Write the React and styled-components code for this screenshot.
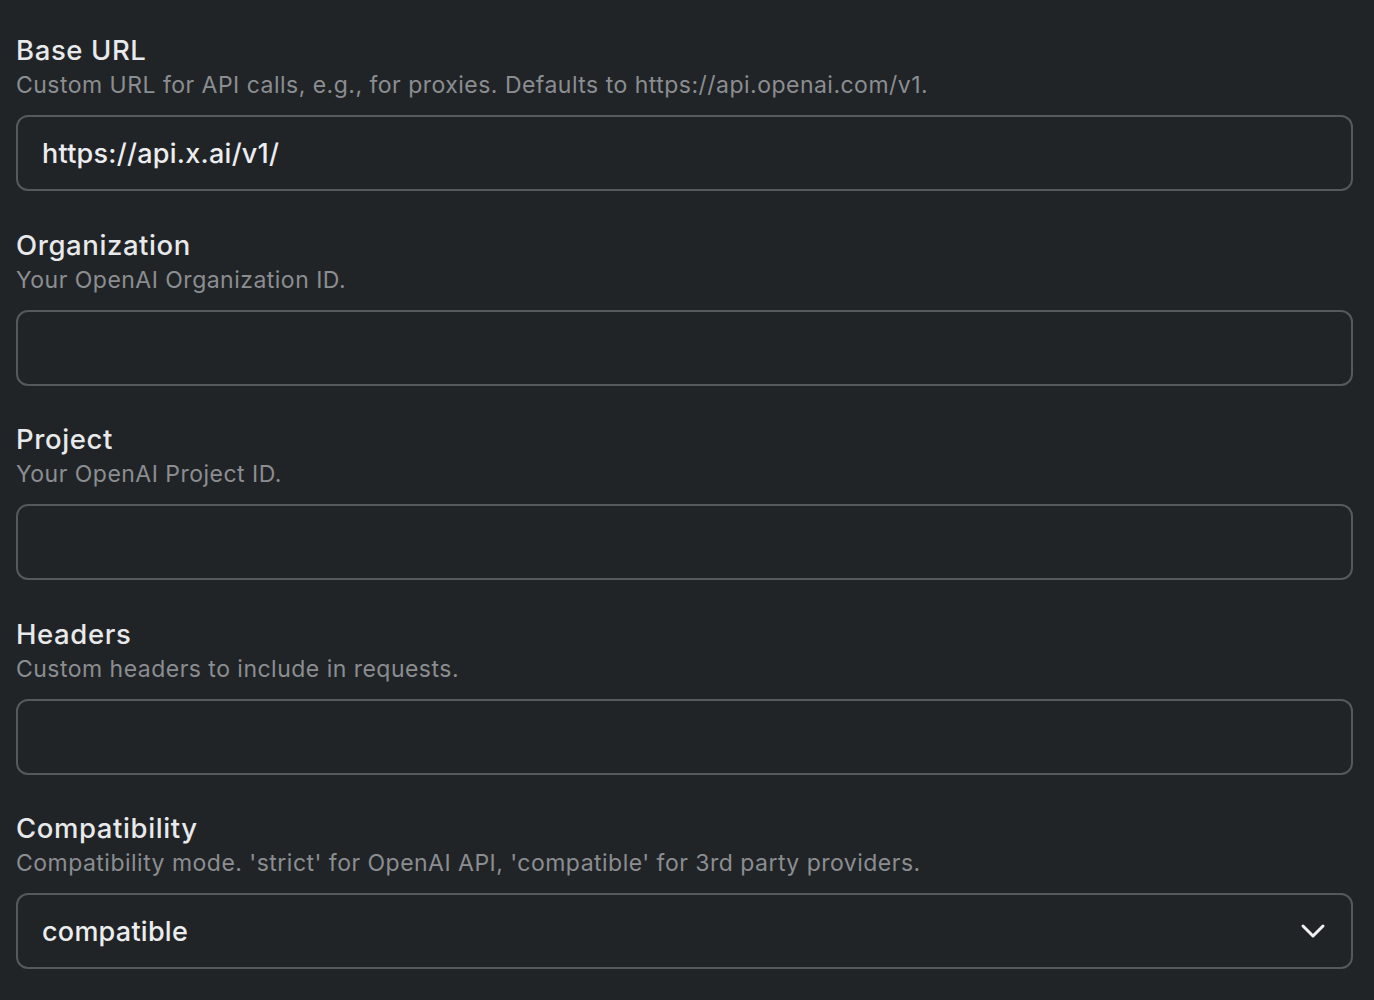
import React from "react";
import styled, { createGlobalStyle } from "styled-components";

const Global = createGlobalStyle`
  html, body { margin: 0; padding: 0; background: #212427; }
  body { font-family: Inter, "Noto Sans", sans-serif; -webkit-font-smoothing: antialiased; }
`;

const Page = styled.div`
  padding: 33px 21px 0 16px;
  display: flex;
  flex-direction: column;
  gap: 36.5px;
`;

const Field = styled.div`
  display: flex;
  flex-direction: column;
`;

const Label = styled.div`
  font-size: 27.5px;
  line-height: 34px;
  color: #e8e9ea;
  font-weight: 450;
  letter-spacing: 0.6px;
`;

const Desc = styled.div`
  font-size: 23px;
  line-height: 36px;
  color: #8b8e91;
  letter-spacing: 0.48px;
  margin-bottom: 12px;
`;

const Box = styled.div`
  box-sizing: border-box;
  height: 76px;
  border: 2px solid #55585c;
  border-radius: 12px;
  display: flex;
  align-items: center;
  justify-content: space-between;
  padding: 0 25px 0 24px;
  font-size: 27px;
  color: #ecedee;
  font-weight: 500;
  letter-spacing: 0.25px;
`;

const Chevron = () => (
  <svg width="26" height="16" viewBox="0 0 26 16" fill="none">
    <path d="M3 3 L13 13 L23 3" stroke="#f0f0f0" strokeWidth="3" strokeLinecap="round" strokeLinejoin="round" />
  </svg>
);

const fields = [
  { label: "Base URL", desc: "Custom URL for API calls, e.g., for proxies. Defaults to https://api.openai.com/v1.", value: "https://api.x.ai/v1/" },
  { label: "Organization", desc: "Your OpenAI Organization ID.", value: "" },
  { label: "Project", desc: "Your OpenAI Project ID.", value: "" },
  { label: "Headers", desc: "Custom headers to include in requests.", value: "" },
  { label: "Compatibility", desc: "Compatibility mode. 'strict' for OpenAI API, 'compatible' for 3rd party providers.", value: "compatible", select: true },
];

export default function App() {
  return (
    <>
      <Global />
      <Page>
        {fields.map((f) => (
          <Field key={f.label}>
            <Label>{f.label}</Label>
            <Desc>{f.desc}</Desc>
            <Box>
              <span>{f.value}</span>
              {f.select && <Chevron />}
            </Box>
          </Field>
        ))}
      </Page>
    </>
  );
}
